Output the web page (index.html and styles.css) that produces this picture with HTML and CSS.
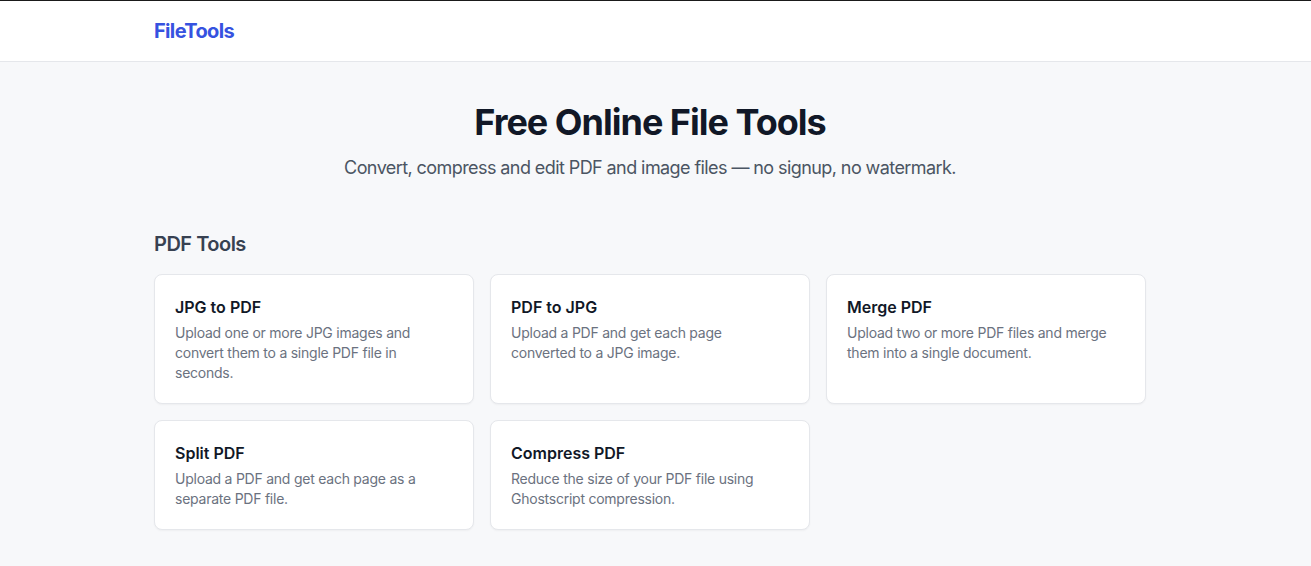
FILE: index.html
```html
<!DOCTYPE html>
<html lang="en">
<head>
    <meta charset="UTF-8">
    <meta name="viewport" content="width=device-width, initial-scale=1.0">
    <title>FileTools</title>
    <link rel="stylesheet" href="styles.css">
</head>
<body>
    <header class="site-header">
        <div class="container">
            <a href="/" class="logo">FileTools</a>
        </div>
    </header>

    <main class="container">
        <section class="hero">
            <h1>Free Online File Tools</h1>
            <p>Convert, compress and edit PDF and image files — no signup, no watermark.</p>
        </section>

        <section class="tool-section">
            <h2>PDF Tools</h2>
            <div class="tool-grid">
                <a href="/jpg-to-pdf" class="tool-card">
                    <h3>JPG to PDF</h3>
                    <p>Upload one or more JPG images and convert them to a single PDF file in seconds.</p>
                </a>
                <a href="/pdf-to-jpg" class="tool-card">
                    <h3>PDF to JPG</h3>
                    <p>Upload a PDF and get each page converted to a JPG image.</p>
                </a>
                <a href="/merge-pdf" class="tool-card">
                    <h3>Merge PDF</h3>
                    <p>Upload two or more PDF files and merge them into a single document.</p>
                </a>
                <a href="/split-pdf" class="tool-card">
                    <h3>Split PDF</h3>
                    <p>Upload a PDF and get each page as a separate PDF file.</p>
                </a>
                <a href="/compress-pdf" class="tool-card">
                    <h3>Compress PDF</h3>
                    <p>Reduce the size of your PDF file using Ghostscript compression.</p>
                </a>
            </div>
        </section>
    </main>
</body>
</html>
```

FILE: styles.css
```css
* {
    box-sizing: border-box;
}

body {
    margin: 0;
    padding-right: 11px;
    font-family: Inter, "Noto Sans", Arial, sans-serif;
    background-color: #f7f8fa;
    color: #111827;
    border-top: 1px solid #1a1a1a;
}

.container {
    max-width: 992px;
    margin: 0 auto;
}

.site-header {
    background-color: white;
    border-bottom: 1px solid #e5e7eb;
    margin-right: -11px;
    padding-right: 11px;
}

.site-header .container {
    padding: 16px 0;
}

.logo {
    display: inline-block;
    font-size: 20px;
    line-height: 28px;
    font-weight: 700;
    letter-spacing: -0.65px;
    color: #3652e0;
    text-decoration: none;
}

.hero {
    text-align: center;
    padding-top: 40px;
}

.hero h1 {
    margin: 0;
    font-size: 36px;
    line-height: 40px;
    font-weight: 700;
    letter-spacing: -1px;
    color: #111827;
}

.hero p {
    margin: 12px 0 0;
    font-size: 18px;
    line-height: 28px;
    letter-spacing: -0.58px;
    color: #4b5563;
}

.tool-section {
    margin-top: 48px;
    padding-bottom: 40px;
}

.tool-section h2 {
    margin: 0 0 16px;
    font-size: 20px;
    line-height: 28px;
    font-weight: 600;
    letter-spacing: -0.5px;
    color: #374151;
}

.tool-grid {
    display: grid;
    grid-template-columns: repeat(3, 1fr);
    gap: 16px;
}

.tool-card {
    display: block;
    background-color: white;
    border: 1px solid #e5e7eb;
    border-radius: 8px;
    padding: 20px;
    text-decoration: none;
    box-shadow: 0 1px 2px rgba(0, 0, 0, 0.04);
}

.tool-card h3 {
    margin: 0;
    font-size: 16px;
    line-height: 24px;
    font-weight: 600;
    color: #111827;
}

.tool-card p {
    margin: 4px 0 0;
    font-size: 14px;
    line-height: 20px;
    letter-spacing: -0.24px;
    color: #6b7280;
}
```
